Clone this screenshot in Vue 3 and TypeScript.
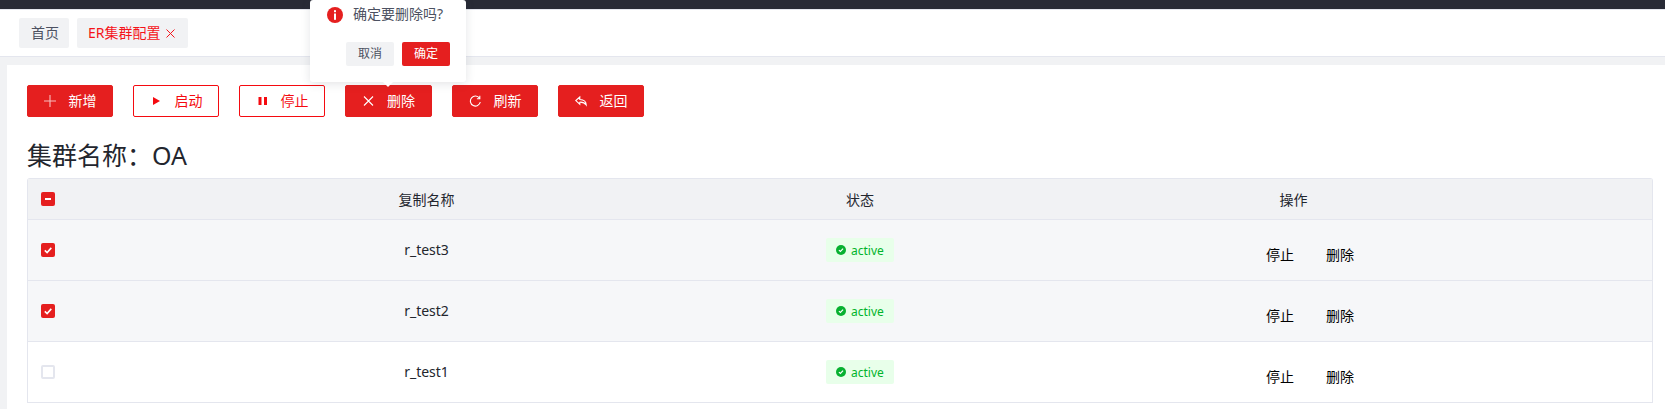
<script setup lang="ts">
interface Row { name: string; checked: boolean; striped: boolean }
const rows: Row[] = [
  { name: 'r_test3', checked: true, striped: true },
  { name: 'r_test2', checked: true, striped: true },
  { name: 'r_test1', checked: false, striped: false },
]
const actions = [
  { label: '新增', icon: 'plus', plain: false },
  { label: '启动', icon: 'play', plain: true },
  { label: '停止', icon: 'pause', plain: true },
  { label: '删除', icon: 'close', plain: false },
  { label: '刷新', icon: 'refresh', plain: false },
  { label: '返回', icon: 'back', plain: false },
]
</script>

<template>
  <div class="page">
    <div class="topbar"></div>
    <div class="tabs">
      <span class="tab">首页</span>
      <span class="tab active">ER集群配置
        <svg class="tab-x" viewBox="0 0 9 9"><path d="M.5.5l8 8M8.500.5l-8 8" /></svg>
      </span>
    </div>
    <main class="content">
      <div class="toolbar">
        <button v-for="a in actions" :key="a.label" class="btn" :class="{ plain: a.plain }">
          <svg class="ico" viewBox="0 0 12 12">
            <path v-if="a.icon === 'plus'" class="line soft" d="M6 0v12M0 6h12" />
            <path v-else-if="a.icon === 'play'" class="fill" d="M3 2l7 4-7 4z" />
            <path v-else-if="a.icon === 'pause'" class="fill" d="M2.500 2h3v8h-3zM8 2h3v8H8z" />
            <path v-else-if="a.icon === 'close'" class="line" d="M2 1.500l9 9M11 1.500l-9 9" />
            <path v-else-if="a.icon === 'refresh'" class="line" d="M10.500 3.200A5 5 0 1 0 11.300 7M10.800.8v2.900H7.900" />
            <path v-else class="line" d="M4.800 2L.8 5.600l4 3.600V7.200c2.700-.2 4.700.4 6.400 2.800 0-3.200-2-5.300-6.400-5.500z" />
          </svg>
          <span class="btn-label">{{ a.label }}</span>
        </button>
        <div class="popover">
          <div class="pop-msg">
            <svg class="pop-ico" viewBox="0 0 16 16">
              <circle cx="8" cy="8" r="8" fill="#e51f1f" />
              <rect x="7" y="3.200" width="2" height="2" fill="#fff" />
              <rect x="7" y="6.500" width="2" height="6.300" fill="#fff" />
            </svg>
            <span class="pop-text">确定要删除吗?</span>
          </div>
          <div class="pop-btns">
            <span class="pop-btn">取消</span>
            <span class="pop-btn ok">确定</span>
          </div>
          <i class="arrow"></i>
        </div>
      </div>
      <h2 class="title">集群名称：OA</h2>
      <div class="table">
        <div class="tr head">
          <div class="cell"><span class="cb on"><i class="minus"></i></span></div>
          <div class="cell c">复制名称</div>
          <div class="cell c">状态</div>
          <div class="cell c">操作</div>
          <div></div>
        </div>
        <div v-for="r in rows" :key="r.name" class="tr" :class="{ striped: r.striped }">
          <div class="cell">
            <span class="cb" :class="{ on: r.checked }">
              <svg v-if="r.checked" viewBox="0 0 14 14" class="tick"><path d="M3.800 7.300l2.300 2.200 4.200-4.600" /></svg>
            </span>
          </div>
          <div class="cell c name">{{ r.name }}</div>
          <div class="cell c">
            <span class="tag">
              <svg viewBox="0 0 12 12" class="tag-ico">
                <circle cx="6" cy="6" r="6" fill="#07b130" />
                <path d="M3.500 6.100l1.800 1.700 3.200-3.400" fill="none" stroke="#fff" stroke-width="1.400" />
              </svg>
              active
            </span>
          </div>
          <div class="cell c ops"><span>停止</span><span>删除</span></div>
          <div></div>
        </div>
      </div>
    </main>
  </div>
</template>

<style>
html, body { margin: 0; background: #f1f2f4; }
</style>

<style scoped>
.page {
  height: 409px;
  overflow: hidden;
  font-family: "Noto Sans", "Noto Sans CJK SC", sans-serif;
  font-size: 14px;
  color: #23262e;
  background: #f1f2f4;
}
.topbar { height: 9px; background: #282a36; border-bottom: 1px solid #e4e6ee; }
.tabs {
  height: 46px;
  background: #fff;
  border-bottom: 1px solid #e4e6ee;
  display: flex;
  align-items: center;
  padding-left: 19px;
  gap: 8px;
}
.tab {
  height: 30px;
  line-height: 30px;
  padding: 0 10px 0 12px;
  background: #f1f2f4;
  border-radius: 2px;
  color: #4c5161;
  display: flex;
  align-items: center;
  gap: 5px;
}
.tab.active { color: #f5141a; padding: 0 13px 0 11px; }
.tab-x { width: 9px; height: 9px; fill: none; stroke: #f5141a; stroke-width: 1; }
.content {
  margin: 8px 0 0 7px;
  background: #fff;
  padding: 20px 12px 0 20px;
  height: 344px;
}
.toolbar { display: flex; gap: 20px; position: relative; }
.btn {
  width: 86px;
  height: 32px;
  box-sizing: border-box;
  background: #e51f1f;
  border: 1px solid #e51f1f;
  border-radius: 2px;
  color: #fff;
  font: inherit;
  padding: 0;
  display: flex;
  align-items: center;
  justify-content: center;
  gap: 13px;
}
.btn:nth-child(4) { width: 87px; }
.btn.plain { background: #fff; color: #f50a10; border-color: #f50a10; }
.btn-label { margin-top: -2px; }
.ico { width: 12px; height: 12px; flex: none; }
.line { fill: none; stroke: currentColor; stroke-width: 1.100; }
.soft { opacity: 0.7; }
.fill { fill: currentColor; }
.popover {
  position: absolute;
  left: 283px;
  top: -85px;
  width: 156px;
  height: 82px;
  background: #fff;
  border-radius: 3px;
  box-shadow: 0 2px 10px rgba(60, 64, 80, 0.14);
}
.pop-msg {
  display: flex;
  align-items: center;
  gap: 10px;
  color: #4c5161;
  padding: 7px 0 0 17px;
  line-height: 16px;
}
.pop-text { margin-top: -2px; }
.pop-ico { width: 16px; height: 16px; flex: none; }
.pop-btns {
  position: absolute;
  right: 16px;
  top: 42px;
  display: flex;
  gap: 8px;
}
.pop-btn {
  width: 48px;
  height: 24px;
  line-height: 24px;
  text-align: center;
  font-size: 12px;
  border-radius: 2px;
  background: #f1f2f4;
  color: #4c5161;
}
.pop-btn.ok { background: #e51f1f; color: #fff; }
.arrow {
  position: absolute;
  left: 73px;
  bottom: -5px;
  border: 5px solid transparent;
  border-bottom: 0;
  border-top-color: #fff;
}
.title {
  margin: 0;
  height: 61px;
  box-sizing: border-box;
  padding-top: 19px;
  font-size: 25px;
  line-height: 38px;
  font-weight: 400;
}
.table {
  border: 1px solid #e4e6ee;
  border-radius: 3px 3px 0 0;
  border-bottom-width: 0;
  width: 1626px;
  box-sizing: border-box;
}
.tr {
  display: grid;
  grid-template-columns: 60px 677px 190px 677px 1fr;
  height: 61px;
  border-bottom: 1px solid #e4e6ee;
  box-sizing: border-box;
  background: #fff;
}
.tr.striped { background: #f6f7f9; }
.tr.head { height: 41px; background: #f1f2f4; }
.cell { display: flex; align-items: center; padding-left: 13px; }
.cell.c { justify-content: center; padding-left: 0; }
.name { padding-bottom: 2px; }
.cb {
  width: 14px;
  height: 14px;
  box-sizing: border-box;
  border: 2px solid #e4e6ee;
  border-radius: 2px;
  background: #fff;
  display: flex;
  align-items: center;
  justify-content: center;
}
.cb.on { background: #e51f1f; border: 0; }
.minus { width: 6px; height: 2px; background: #fff; }
.tick { width: 14px; height: 14px; fill: none; stroke: #fff; stroke-width: 1.600; }
.tag {
  display: flex;
  align-items: center;
  gap: 5px;
  height: 24px;
  width: 68px;
  box-sizing: border-box;
  padding-left: 10px;
  background: #e8ffea;
  color: #00b42a;
  font-size: 12px;
  border-radius: 2px;
}
.tag-ico { width: 10px; height: 10px; flex: none; }
.cell.c.ops {
  gap: 32px;
  color: #000;
  padding-top: 7px;
  padding-left: 33px;
}
</style>
